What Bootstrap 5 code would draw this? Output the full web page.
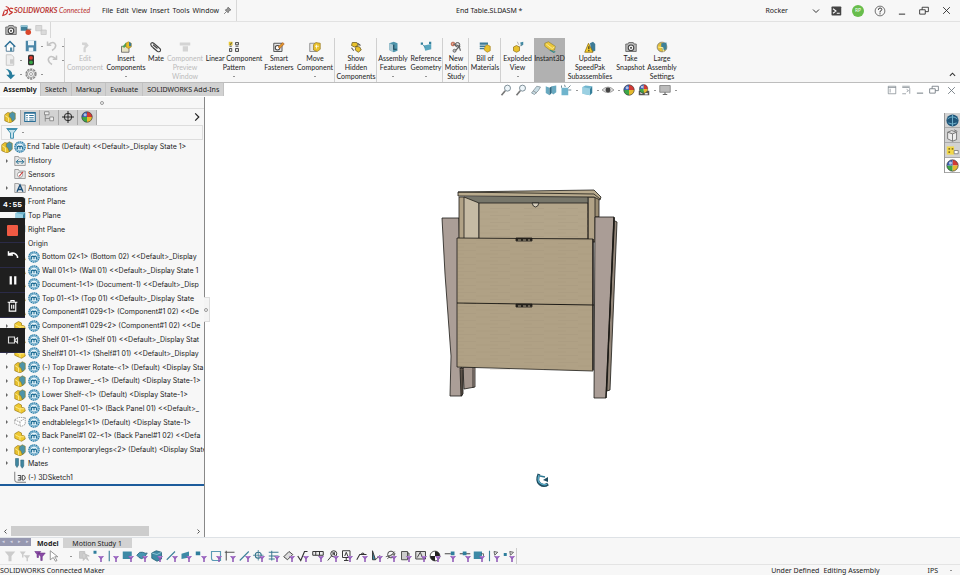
<!DOCTYPE html>
<html lang="en">
<head>
<meta charset="utf-8">
<meta name="viewport" content="width=device-width, initial-scale=1">
<title>End Table.SLDASM</title>
<link href="https://cdn.jsdelivr.net/npm/bootstrap@5.3.0/dist/css/bootstrap.min.css" rel="stylesheet">
<style>
body{font-family:"Noto Sans","Open Sans",sans-serif;font-size:7px;line-height:9px;color:#222;background:#fff}
svg{display:block;flex:none}
button,.btn{font-size:7px;line-height:9px;color:inherit;border-radius:0;background:none}
a{color:inherit;text-decoration:none}
.ic{width:12px;height:12px}
.bar{background:#f7f7f7}
.titlebar{height:22px;border-bottom:1px solid #e2e2e2}
.brand{color:#b8322f;font-style:italic;font-family:Lato,sans-serif;width:102px;padding-left:2px}
.menu{gap:3px}
.sep{width:1px;align-self:stretch;background:#d8d8d8}
.doc-title{padding-right:24px}
.wctl{gap:10px}
.wctl .win{width:12px;display:flex;justify-content:center}
.avatar{width:12px;height:12px;background:#68bd4c;font-size:5px}
.quick{height:16px;padding-left:5px;gap:3px}
.ribbon{height:45px;border-bottom:1px solid #bdbdbd}
.std{width:65px;display:grid;grid-template-columns:21px 21px 21px;grid-auto-rows:14px;padding:1px 0 0 4px;border-right:1px solid #d0d0d0;align-content:start}
.std button,.hud button{display:flex;align-items:center;padding:0;border:0}
.dd::after{content:"";border:1px solid transparent;border-top-color:#333;border-bottom:0;margin-left:4px}
.cmds{display:grid;grid-template-columns:40px 42px 18px 40px 58px 32px 40px 42px 32px 34px 26px 32px 33px 31px 50px 31px 32px;font-family:Lato,sans-serif}
.cmds button{display:flex;flex-direction:column;align-items:center;padding:3px 0 0;border:0;white-space:nowrap;color:#222;overflow:visible;font-family:inherit}
.cmds .ic{margin-bottom:1px}
.cmds button:disabled{color:#bbb;opacity:1}
.cmds .edge{box-shadow:inset -1px 0 #d0d0d0}
.cmds .on{background:#b1b1b1}
.cmds .more::after{content:"";border:1px solid transparent;border-top-color:#333;border-bottom:0;margin-top:4px}
.tabrow{height:14px}
.cm-tabs button{background:#d2d2d2;border:0;border-right:1px solid #c2c2c2;padding:0 4px;height:13px}
.cm-tabs .active{background:#f7f7f7;font-weight:700;width:41px;padding:0}
.hud{gap:3px;padding-left:66px}
.fm{width:205px;border-right:1px solid #888;background:#f7f7f7}
.grip{height:12px;border-bottom:1px solid #ddd}
.dot{width:4px;height:4px;border:1px solid #999;border-radius:50%}
.fm-tabs{height:16px}
.fm-tabs button{width:19px;height:15px;border:0;border-right:1px solid #aaa;background:#d2d2d2;padding:0;display:flex;align-items:center;justify-content:center}
.fm-tabs .active{background:#f7f7f7;width:21px}
.filter{height:15px;margin:0 1px;border:1px solid #ddd}
.tree{display:grid;grid-template-rows:repeat(25,1fr);height:346px;margin:0;padding:0;border-bottom:2px solid #1d5c9c;list-style:none;font-family:Inter,sans-serif}
.tree li{display:flex;align-items:center;gap:2px;padding-left:14px;white-space:nowrap;overflow:hidden}
.tree .root{padding-left:1px;gap:1px}
.tree .x::before{content:"";border:2px solid transparent;border-left:2px solid #666;border-right:0;margin:0 6px 0 -8px}
.tree .x > svg:first-child{margin-left:-2px}
.hscroll{height:12px;gap:3px;padding:0 3px}
.thumb{width:138px;height:10px;background:#cdcdcd}
.rec{position:absolute;left:0;top:100px;width:25px;color:#fff;z-index:3}
.rec .time{background:#1f1f1f;height:15px;border-radius:0 3px 0 0;margin-bottom:6px;font:700 8px/15px "Liberation Mono",monospace}
.rec button{background:#1f1f1f;width:25px;height:25px;border:0;border-bottom:1px solid #2b2b48;padding:0;display:flex;align-items:center;justify-content:center}
.rec .cam{margin-top:10px}
.split{position:absolute;left:204px;top:200px;width:6px;height:25px;background:#f4f4f4;border:1px solid #ddd;border-left:0;z-index:2}
.view{position:relative;background:#fff}
.taskpane{position:absolute;right:0;top:16px;width:16px;border-left:1px solid #999}
.taskpane button{height:15px;width:15px;background:#d2d2d2;border:0;border-bottom:1px solid #aaa;padding:0 1px}
.taskpane .active{background:#fff}
.btabs{height:11px}
.tabnav{background:#9698b0;color:#d5d6e4;width:31px;height:8px;font-size:5px;line-height:7px}
.btabs button{border:0;padding:0 4px;height:11px}
.btabs .model{font-weight:700;background:#f7f7f7;padding:0 4px 0 6px}
.btabs .motion{background:#d2d2d2;width:69px}
.filters{height:17px;border-bottom:1px solid #e4e4e4;padding-left:3px}
.fgrid{display:grid;grid-template-columns:repeat(35,1fr);width:514px;border-right:1px solid #ccc}
.fgrid button{border:0;padding:0;display:flex;align-items:center;justify-content:center}
.status{height:10px}
</style>
<script src="https://cdn.jsdelivr.net/npm/bootstrap@5.3.0/dist/js/bootstrap.bundle.min.js"></script>
</head>
<body class="vh-100 d-flex flex-column overflow-hidden">
<svg width="0" height="0" class="position-absolute" aria-hidden="true">
<defs>
<symbol id="fn" viewBox="0 0 16 16"><path d="M8 8h8l-3 3.500V16h-2v-4.500z" fill="#8d55b5"/><path d="M10 9h4" stroke="#cfa9e8"/></symbol>
<symbol id="asm" viewBox="0 0 16 16"><path d="M1 5l4-3 4 1v4l4 2v4l-5 3-7-3z" fill="#e9c22d" stroke="#8a6a10" stroke-width=".8"/><path d="M7 4l4-3 4 2v8l-4 3-2-5-2-1z" fill="#4e94a8" stroke="#8a7a20" stroke-width=".8"/><path d="M1 6l5 3v6" fill="none" stroke="#fff2a0"/></symbol>
<symbol id="part" viewBox="0 0 16 16"><path d="M1 5l5-3 4 2v3l4 1 1 4-5 3-9-4z" fill="#efc92f" stroke="#9a7712" stroke-width=".9"/><path d="M1 6l6 3 7 0M8 9v5" fill="none" stroke="#fff2a0"/></symbol>
<symbol id="ghost" viewBox="0 0 16 16"><path d="M1 5l5-3 9 0v9l-5 3-9-4zM1 5l6 3 8-5M8 8v6" fill="#fff" stroke="#888" stroke-dasharray="2 1"/></symbol>
<symbol id="m" viewBox="0 0 16 16"><circle cx="8" cy="8" r="6.800" fill="#d6ebf5" stroke="#277ca8" stroke-width="1.800" stroke-dasharray="2 .6"/><circle cx="8" cy="8" r="5.300" fill="#e8f5fb" stroke="#277ca8" stroke-width=".8"/><path d="M4.800 11V6.500M4.800 8q1.600-2.400 3.200 0v3M8 8q1.600-2.400 3.200 0v3" fill="none" stroke="#17678f" stroke-width="1.400"/></symbol>
<symbol id="fold" viewBox="0 0 16 16"><path d="M1 14V2h5l1 2h8v10z" fill="#e6e6e6" stroke="#888"/></symbol>
<symbol id="ball" viewBox="0 0 16 16"><path d="M8 8V1a7 7 0 0 1 7 7z" fill="#d33a35"/><path d="M8 8h7a7 7 0 0 1-7 7z" fill="#e5b92e"/><path d="M8 8v7a7 7 0 0 1-7-7z" fill="#3da648"/><path d="M8 8H1a7 7 0 0 1 7-7z" fill="#3b62b8"/><circle cx="8" cy="8" r="7" fill="none" stroke="#333" stroke-width=".8"/><circle cx="5.500" cy="5" r="2" fill="#fff" opacity=".6"/></symbol>
<symbol id="cam" viewBox="0 0 16 16"><path d="M1 4h3l1-2h6l1 2h3v10H1z" fill="#b9b9b9" stroke="#555"/><circle cx="8" cy="9" r="3.700" fill="#fff" stroke="#444" stroke-width="1.500"/><circle cx="8" cy="9" r="1.500" fill="#555"/></symbol>
<symbol id="cube" viewBox="0 0 16 16"><path d="M2 4l4-2 9 1-3 3v9l-10-2z" fill="#6fb4cd"/><path d="M2 4l10 2v9L2 13z" fill="#9bd0e2"/><path d="M12 6l3-3v9l-3 3z" fill="#357f9a"/></symbol>
<symbol id="mag" viewBox="0 0 16 16"><circle cx="10" cy="5.500" r="4" fill="#eef6fa" stroke="#7b8c95" stroke-width="1.300"/><path d="M7 9l-5 6" stroke="#777" stroke-width="2.200"/></symbol>
<symbol id="funnel" viewBox="0 0 16 16"><path d="M1 2h14L10 8v7H6V8z" fill="currentColor"/></symbol>
<symbol id="restore" viewBox="0 0 16 16"><path d="M1 6h9v7H1zM5 6V2h10v7h-5" fill="none" stroke="currentColor" stroke-width="1.300"/></symbol>
<symbol id="close" viewBox="0 0 16 16"><path d="M2 2l12 12M14 2L2 14" stroke="currentColor" stroke-width="1.500"/></symbol>
<symbol id="min" viewBox="0 0 16 16"><path d="M3 13h10" stroke="currentColor" stroke-width="1.500"/></symbol>
</defs>
</svg>

<header class="bar titlebar d-flex align-items-center flex-shrink-0">
  <a href="#" class="brand d-flex align-items-center text-nowrap fw-bold">
    <svg class="ic" viewBox="0 0 16 16"><path d="M5 2q6 1 2 5l-4 0M4 7q4 0 3 3t-6 4l2-6M15 5q-5-2-5 1t3 3-4 4" fill="none" stroke="#c8312e" stroke-width="1.500"/></svg>
    <span>SOLIDWORKS <span class="fw-normal">Connected</span></span></a>
  <nav class="menu d-flex"><a href="#">File</a><a href="#">Edit</a><a href="#">View</a><a href="#">Insert</a><a href="#">Tools</a><a href="#">Window</a></nav>
  <button class="btn p-0 border-0 ms-1 me-1" aria-label="Pin menu"><svg width="9" height="9" viewBox="0 0 16 16"><path d="M9 2l5 5-3 1-2 4-5-5 4-2zM6 10l-4 4" fill="#999" stroke="#666" stroke-width="1.400"/></svg></button>
  <span class="sep"></span>
  <div class="doc-title flex-grow-1 text-center">End Table.SLDASM *</div>
  <div class="d-flex align-items-center justify-content-end wctl pe-2">
    <button class="btn p-0 border-0 d-flex align-items-center" aria-label="User role">Rocker <svg class="ms-4" width="8" height="8" viewBox="0 0 16 16"><path d="M2 5l6 6 6-6" fill="none" stroke="#333" stroke-width="2"/></svg></button>
    <button class="btn p-0 border-0" aria-label="Console"><svg class="ic" viewBox="0 0 16 16"><rect x="2" y="2" width="13" height="12" rx="1" fill="#444"/><path d="M4 5l4 3-4 3M9 11h4" fill="none" stroke="#fff" stroke-width="1.400"/></svg></button>
    <span class="avatar d-flex align-items-center justify-content-center rounded-circle text-white">RP</span>
    <button class="btn p-0 border-0" aria-label="Help"><svg class="ic" viewBox="0 0 16 16"><circle cx="8" cy="8" r="6.500" fill="none" stroke="#444"/><path d="M5.800 6.500q0-2.500 2.300-2.500t2.300 2Q10.400 7.500 8 8.500V10M8 11v1.500" fill="none" stroke="#333" stroke-width="1.300"/></svg></button>
    <button class="btn win p-0 border-0" aria-label="Minimize"><svg width="10" height="10"><use href="#min"/></svg></button>
    <button class="btn win p-0 border-0" aria-label="Restore"><svg width="10" height="10"><use href="#restore"/></svg></button>
    <button class="btn win p-0 border-0" aria-label="Close"><svg width="9" height="9"><use href="#close"/></svg></button>
  </div>
</header>

<div class="bar quick d-flex align-items-center flex-shrink-0">
  <button class="btn p-0 border-0" aria-label="Capture"><svg class="ic"><use href="#cam"/></svg></button>
  <button class="btn p-0 border-0" aria-label="Record"><svg class="ic" viewBox="0 0 16 16"><path d="M1 2h9v7H1z" fill="#3f7f98"/><path d="M1 2h9v2H1z" fill="#8dc3d6"/><circle cx="11" cy="11" r="3.700" fill="#d9472b"/><path d="M8 7h7" stroke="#555"/></svg></button>
  <button class="btn p-0 border-0" disabled aria-label="Stop"><svg class="ic" viewBox="0 0 16 16"><path d="M1 2h8v7H1zM8 8h7v6H8z" fill="#ccc" stroke="#aaa"/></svg></button>
  <span class="sep"></span>
</div>

<div class="bar ribbon d-flex flex-shrink-0">
  <div class="std flex-shrink-0">
    <button aria-label="Home"><svg class="ic" viewBox="0 0 16 16"><path d="M3 8v7h10V8" fill="#fff" stroke="#2b5f80"/><path d="M1 9l7-7 7 7" fill="none" stroke="#2b6f96" stroke-width="2"/><path d="M8 10h3v5H8z" fill="#4e8aa5"/></svg></button>
    <button class="dd" aria-label="Save"><svg class="ic" viewBox="0 0 16 16"><path d="M1 1h14v14H1z" fill="#4b87a8"/><path d="M4 1h8v6H4zM5 10h6v5H5z" fill="#eef6fa"/></svg></button>
    <button class="dd" aria-label="Undo"><svg class="ic" viewBox="0 0 16 16"><path d="M2 2v5h5M3 6q8-6 10 1 0 4-5 7" fill="none" stroke="#c4c4c4" stroke-width="2"/></svg></button>
    <button class="dd" aria-label="New"><svg class="ic" viewBox="0 0 16 16"><path d="M3 1h7l3 3v11H3z" fill="#eee" stroke="#bbb"/><path d="M8 7h5v6H8z" fill="#ccc"/></svg></button>
    <button aria-label="Rebuild"><svg class="ic" viewBox="0 0 16 16"><rect x="4" y="1" width="8" height="14" rx="2" fill="#333"/><circle cx="8" cy="5" r="2.500" fill="#e23b2e"/><circle cx="8" cy="11" r="2.500" fill="#36a545"/></svg></button>
    <button class="dd" aria-label="Redo"><svg class="ic" viewBox="0 0 16 16"><path d="M14 2v5H9M13 6Q5 0 3 7q0 4 5 7" fill="none" stroke="#c4c4c4" stroke-width="2"/></svg></button>
    <button class="dd" aria-label="Select"><svg class="ic" viewBox="0 0 16 16"><path d="M2 1q9 1 9 8h4l-6 6-6-6h4q0-5-5-8z" fill="#277c9c"/></svg></button>
    <button class="dd" aria-label="Options"><svg class="ic" viewBox="0 0 16 16"><circle cx="8" cy="8" r="6.500" fill="none" stroke="#888" stroke-width="2" stroke-dasharray="3 1.100"/><circle cx="8" cy="8" r="4.800" fill="#eee" stroke="#888"/><circle cx="8" cy="8" r="2" fill="#fff" stroke="#888"/></svg></button>
  </div>
  <div class="cmds flex-shrink-0">
    <button disabled><svg class="ic" viewBox="0 0 16 16"><path d="M4 2h6l3 4-4 4v5H6V9L8 6 4 5z" fill="#d4d4d4"/></svg>Edit<br>Component</button>
    <button class="more"><svg class="ic" viewBox="0 0 16 16"><path d="M2 7h10v8H2z" fill="#e6e2c4" stroke="#555"/><path d="M3 8l5-6 2 2-4 5z" fill="#4ca55a"/><path d="M8 3l3-2 4 2v5l-4 2-3-2z" fill="#e6bc28" stroke="#9a7712" stroke-width=".7"/><path d="M12 1l3 2v4h-3z" fill="#3c7992"/></svg>Insert<br>Components</button>
    <button><svg class="ic" viewBox="0 0 16 16"><path d="M4 9l6 5q3 1 4-1t-2-4L5 3Q2 1 1 4q0 1 1 3l7 6M4 5l6 5" fill="none" stroke="#444" stroke-width="1.500"/></svg>Mate</button>
    <button disabled><svg class="ic" viewBox="0 0 16 16"><path d="M1 2h14v4H1zM5 7h7v7H5z" fill="#d4d4d4"/></svg>Component<br>Preview<br>Window</button>
    <button class="more"><svg class="ic" viewBox="0 0 16 16"><path d="M1 1h5v5H1z" fill="#e8c730"/><path d="M10 2h4v3h-4zM2 10h3v4H2zM10 10h4v4h-4z" fill="#ddd" stroke="#444" stroke-width="1.200"/><path d="M2 7h3M10 7h4M3 5l2-3" stroke="#444" stroke-width="1.200"/></svg>Linear Component<br>Pattern</button>
    <button><svg class="ic" viewBox="0 0 16 16"><path d="M1 3h11v11H1z" fill="#e4e4e4" stroke="#555" stroke-width="1.300"/><circle cx="6" cy="9" r="3" fill="#fff" stroke="#444" stroke-width="1.400"/><path d="M7 8l6-6 2 2-6 6z" fill="#e29a2c" stroke="#a04b20" stroke-width=".8"/></svg>Smart<br>Fasteners</button>
    <button class="more edge"><svg class="ic" viewBox="0 0 16 16"><path d="M1 3h9v11H1z" fill="#e6e6e6" stroke="#777"/><path d="M6 5l3-3 6 1v8l-4 3-5-2z" fill="#e9c22d" stroke="#8a6a10" stroke-width=".8"/><path d="M10 5v5M8 7h5" stroke="#fff"/></svg>Move<br>Component</button>
    <button class="edge"><svg class="ic" viewBox="0 0 16 16"><path d="M3 2h6l2 4-5 2-4-2zM8 7l5 1 2 4-4 3-4-3z" fill="#e9c22d" stroke="#6a5a20"/><path d="M2 9l3 4M10 3l4 3" stroke="#555" stroke-width="1.400"/></svg>Show<br>Hidden<br>Components</button>
    <button class="more"><svg class="ic" viewBox="0 0 16 16"><path d="M3 3l6-2 5 2v10l-5 2-6-3z" fill="#4e94ab"/><path d="M3 3l5 2v10l-5-3z" fill="#a8c9d4"/><path d="M9 5v6h4" fill="none" stroke="#20485a" stroke-width="1.500"/></svg>Assembly<br>Features</button>
    <button class="more edge"><svg class="ic" viewBox="0 0 16 16"><path d="M5 6l10-2v7L7 13z" fill="#58a5be"/><path d="M1 2h3v3H1zM12 1h3v3h-3z" fill="#36809c"/><path d="M4 5l3 4" stroke="#36809c"/></svg>Reference<br>Geometry</button>
    <button class="edge"><svg class="ic" viewBox="0 0 16 16"><circle cx="4" cy="4" r="2.500" fill="#f5a38a" stroke="#a04b30"/><circle cx="10" cy="5" r="3" fill="#ddd" stroke="#555" stroke-width="1.300"/><path d="M4 4l9 3-7 7M12 7l2 6" fill="none" stroke="#666" stroke-width="1.500"/><circle cx="6" cy="13" r="2" fill="#bbb" stroke="#555"/></svg>New<br>Motion<br>Study</button>
    <button class="edge"><svg class="ic" viewBox="0 0 16 16"><path d="M1 2h11v3H1zM1 6h8v2H1zM1 9h6v2H1z" fill="#3d7b97"/><path d="M8 7l3-2 4 2v6l-4 2-4-3z" fill="#e9c22d" stroke="#9a7712" stroke-width=".8"/></svg>Bill of<br>Materials</button>
    <button class="more"><svg class="ic" viewBox="0 0 16 16"><path d="M2 8l4-2 4 2v5l-4 2-4-2z" fill="#e9c22d" stroke="#8a6a10" stroke-width=".9"/><path d="M11 2l4-1v4l-3 2z" fill="#4189a3"/><path d="M9 8l4-3M7 1l2 4" stroke="#999"/></svg>Exploded<br>View</button>
    <button class="on"><svg class="ic" viewBox="0 0 16 16"><path d="M1 3l5-2 9 6-1 5-5 1-8-6z" fill="#ecc83c" stroke="#8a7a30" stroke-width=".8"/><path d="M3 4l8 6 3-2" stroke="#fff7b0" fill="none"/><path d="M8 12l5 3 2-1" stroke="#388" stroke-width="1.500" fill="none"/></svg>Instant3D</button>
    <button><svg class="ic" viewBox="0 0 16 16"><path d="M8 3l4-2 3 3v9l-5 2z" fill="#3d7b97"/><path d="M6 3l6 12H1z" fill="#f4cd2c" stroke="#8a6a10"/><path d="M6.500 7v4M6.500 12v1.500" stroke="#222" stroke-width="1.400"/></svg>Update<br>SpeedPak<br>Subassemblies</button>
    <button><svg class="ic"><use href="#cam"/></svg>Take<br>Snapshot</button>
    <button><svg class="ic" viewBox="0 0 16 16"><circle cx="8" cy="8" r="6.500" fill="#e5bf35" stroke="#777"/><path d="M7 3l7-1v9l-5 2-2-5z" fill="#3d8199"/><path d="M3 8l6 1 1 5" fill="none" stroke="#fff2a0" stroke-width="1.400"/></svg>Large<br>Assembly<br>Settings</button>
  </div>
  <button class="btn p-0 border-0 ms-auto align-self-end me-1 mb-1" aria-label="Collapse ribbon"><svg width="7" height="7" viewBox="0 0 16 16"><path d="M2 11l6-6 6 6" fill="none" stroke="#333" stroke-width="2.500"/></svg></button>
</div>

<div class="tabrow d-flex flex-shrink-0">
  <div class="cm-tabs d-flex flex-shrink-0" role="tablist">
    <button class="active" role="tab">Assembly</button><button role="tab">Sketch</button><button role="tab">Markup</button><button role="tab">Evaluate</button><button role="tab">SOLIDWORKS Add-Ins</button>
  </div>
  <div class="hud d-flex align-items-center mx-auto" role="toolbar" aria-label="View">
    <button aria-label="Zoom to fit"><svg class="ic"><use href="#mag"/></svg></button>
    <button aria-label="Zoom to area"><svg class="ic"><use href="#mag"/></svg></button>
    <button aria-label="Previous view"><svg class="ic" viewBox="0 0 16 16"><path d="M2 12l7-9 5 1-3 5-5 5z" fill="#c9dde5" stroke="#7b8c95"/><path d="M4 9l5 3" stroke="#888"/></svg></button>
    <button aria-label="Section view"><svg class="ic" viewBox="0 0 16 16"><path d="M1 3l5 2v10l-5-3zM9 3l6-1v9l-4 3-2-2z" fill="#68a9c0"/><path d="M6 5l3-2v9l-3 3z" fill="#2d6a84"/></svg></button>
    <button class="dd" aria-label="View orientation"><svg class="ic" viewBox="0 0 16 16"><path d="M2 5h9v10H2z" fill="#6fb4cd"/><path d="M11 5l3-3M2 5V2M11 8h4M6 1l1 3" stroke="#6b8792" stroke-width="1.300"/></svg></button>
    <button class="dd" aria-label="Display style"><svg class="ic"><use href="#cube"/></svg></button>
    <button class="dd" aria-label="Hide items"><svg class="ic" viewBox="0 0 16 16"><path d="M0 8q8-8 16 0-8 7-16 0z" fill="#ddd" stroke="#888"/><circle cx="8" cy="8" r="3.300" fill="#444"/></svg></button>
    <button aria-label="Edit appearance"><svg class="ic"><use href="#ball"/></svg></button>
    <button class="dd" aria-label="Apply scene"><svg class="ic" viewBox="0 0 16 16"><path d="M1 9h14v6H1z" fill="#555"/><path d="M3 11h3v2H3zM9 12h4v2H9z" fill="#eee"/><use href="#ball" width="13" height="13" x="1"/></svg></button>
    <button class="dd" aria-label="View settings"><svg class="ic" viewBox="0 0 16 16"><path d="M1 2h14v9H1z" fill="#bbb" stroke="#777"/><path d="M8 11v3M5 14h6" stroke="#666" stroke-width="1.500"/></svg></button>
  </div>
  <div class="d-flex align-items-center gap-1 pe-1 text-secondary">
    <button class="btn p-0 border-0" aria-label="Dock left"><svg width="10" height="10" viewBox="0 0 16 16"><path d="M2 2h12v12H2zM2 4h12M5 6v6" fill="none" stroke="currentColor"/></svg></button>
    <button class="btn p-0 border-0" aria-label="Dock right"><svg width="10" height="10" viewBox="0 0 16 16"><path d="M2 2h12M14 5v9M2 4h12M2 14h6M9 7l3 2-3 2" fill="none" stroke="currentColor"/></svg></button>
    <button class="btn p-0 border-0" aria-label="Minimize document"><svg width="10" height="10"><use href="#min"/></svg></button>
    <button class="btn p-0 border-0" aria-label="Restore document"><svg width="10" height="10"><use href="#restore"/></svg></button>
    <button class="btn p-0 border-0 ms-1" aria-label="Close document"><svg width="9" height="9"><use href="#close"/></svg></button>
  </div>
</div>

<main class="d-flex flex-grow-1 position-relative overflow-hidden">
  <aside class="fm d-flex flex-column flex-shrink-0">
    <div class="grip d-flex align-items-center justify-content-center flex-shrink-0"><span class="dot"></span></div>
    <div class="fm-tabs d-flex align-items-center flex-shrink-0" role="tablist">
      <button class="active" role="tab" aria-label="FeatureManager"><svg class="ic"><use href="#asm"/></svg></button>
      <button role="tab" aria-label="Properties"><svg class="ic" viewBox="0 0 16 16"><path d="M1 2h14v12H1z" fill="#fff" stroke="#2b6f96" stroke-width="1.500"/><path d="M1 3h14M3 6h2M3 9h2M3 12h2M7 6h6M7 9h6M7 12h6" stroke="#2b6f96" stroke-width="1.500"/></svg></button>
      <button role="tab" aria-label="Configurations"><svg class="ic" viewBox="0 0 16 16"><path d="M2 1h6v4H2zM9 8h5v5H9z" fill="#eee" stroke="#777"/><path d="M3 5v9M3 10h6" stroke="#777"/></svg></button>
      <button role="tab" aria-label="Dimensions"><svg class="ic" viewBox="0 0 16 16"><circle cx="8" cy="8" r="5" fill="none" stroke="#222" stroke-width="1.300"/><path d="M8 0v16M0 8h16" stroke="#222" stroke-width="1.300"/></svg></button>
      <button role="tab" aria-label="Display"><svg class="ic"><use href="#ball"/></svg></button>
      <a href="#" class="ms-auto me-1" aria-label="More tabs"><svg width="6" height="10" viewBox="0 0 10 16"><path d="M2 2l6 6-6 6" fill="none" stroke="#222" stroke-width="2"/></svg></a>
    </div>
    <div class="filter d-flex align-items-center flex-shrink-0"><button class="btn dd p-0 border-0 d-flex align-items-center ms-1" aria-label="Filter tree"><svg class="ic" viewBox="0 0 16 16"><path d="M1 2h14L10 8v7H6V8z" fill="#c4e0ea" stroke="#3f8fae" stroke-width="1.300"/><path d="M1 2h14l-2 2H3z" fill="#3f8fae"/></svg></button></div>
    <ul class="tree flex-shrink-0">
      <li class="root"><svg class="ic"><use href="#asm"/></svg><svg class="ic"><use href="#m"/></svg>End Table (Default) &lt;&lt;Default&gt;_Display State 1&gt;</li>
      <li class="x"><svg class="ic" viewBox="0 0 16 16"><use href="#fold"/><path d="M3 9h10M6 6L3 9l3 3M10 6l3 3-3 3" fill="none" stroke="#276f90" stroke-width="1.300"/></svg>History</li>
      <li><svg class="ic" viewBox="0 0 16 16"><use href="#fold"/><circle cx="8" cy="9" r="3.500" fill="#fff" stroke="#888"/><path d="M7 11l5-6" stroke="#c33" stroke-width="1.500"/></svg>Sensors</li>
      <li class="x"><svg class="ic" viewBox="0 0 16 16"><use href="#fold"/><path d="M4 13l4-9 4 9M6 10h5" fill="none" stroke="#1c4f78" stroke-width="1.800"/></svg>Annotations</li>
      <li><svg class="ic"><use href="#cube"/></svg>Front Plane</li>
      <li><svg class="ic"><use href="#cube"/></svg>Top Plane</li>
      <li><svg class="ic"><use href="#cube"/></svg>Right Plane</li>
      <li><svg class="ic" viewBox="0 0 16 16"><path d="M3 2v11h11" fill="none" stroke="#357f9a" stroke-width="1.500"/></svg>Origin</li>
      <li class="x"><svg class="ic"><use href="#part"/></svg><svg class="ic"><use href="#m"/></svg>Bottom 02&lt;1&gt; (Bottom 02) &lt;&lt;Default&gt;_Display</li>
      <li class="x"><svg class="ic"><use href="#part"/></svg><svg class="ic"><use href="#m"/></svg>Wall 01&lt;1&gt; (Wall 01) &lt;&lt;Default&gt;_Display State 1</li>
      <li class="x"><svg class="ic"><use href="#part"/></svg><svg class="ic"><use href="#m"/></svg>Document-1&lt;1&gt; (Document-1) &lt;&lt;Default&gt;_Disp</li>
      <li class="x"><svg class="ic"><use href="#part"/></svg><svg class="ic"><use href="#m"/></svg>Top 01-&lt;1&gt; (Top 01) &lt;&lt;Default&gt;_Display State</li>
      <li class="x"><svg class="ic"><use href="#part"/></svg><svg class="ic"><use href="#m"/></svg>Component#1 029&lt;1&gt; (Component#1 02) &lt;&lt;De</li>
      <li class="x"><svg class="ic"><use href="#part"/></svg><svg class="ic"><use href="#m"/></svg>Component#1 029&lt;2&gt; (Component#1 02) &lt;&lt;De</li>
      <li class="x"><svg class="ic"><use href="#part"/></svg><svg class="ic"><use href="#m"/></svg>Shelf 01-&lt;1&gt; (Shelf 01) &lt;&lt;Default&gt;_Display Stat</li>
      <li class="x"><svg class="ic"><use href="#part"/></svg><svg class="ic"><use href="#m"/></svg>Shelf#1 01-&lt;1&gt; (Shelf#1 01) &lt;&lt;Default&gt;_Display</li>
      <li class="x"><svg class="ic"><use href="#asm"/></svg><svg class="ic"><use href="#m"/></svg>(-) Top Drawer Rotate-&lt;1&gt; (Default) &lt;Display Sta</li>
      <li class="x"><svg class="ic"><use href="#asm"/></svg><svg class="ic"><use href="#m"/></svg>(-) Top Drawer_-&lt;1&gt; (Default) &lt;Display State-1&gt;</li>
      <li class="x"><svg class="ic"><use href="#asm"/></svg><svg class="ic"><use href="#m"/></svg>Lower Shelf-&lt;1&gt; (Default) &lt;Display State-1&gt;</li>
      <li class="x"><svg class="ic"><use href="#part"/></svg><svg class="ic"><use href="#m"/></svg>Back Panel 01-&lt;1&gt; (Back Panel 01) &lt;&lt;Default&gt;_</li>
      <li class="x"><svg class="ic"><use href="#ghost"/></svg><svg class="ic"><use href="#m"/></svg>endtablelegs1&lt;1&gt; (Default) &lt;Display State-1&gt;</li>
      <li class="x"><svg class="ic"><use href="#part"/></svg><svg class="ic"><use href="#m"/></svg>Back Panel#1 02-&lt;1&gt; (Back Panel#1 02) &lt;&lt;Defa</li>
      <li class="x"><svg class="ic"><use href="#asm"/></svg><svg class="ic"><use href="#m"/></svg>(-) contemporarylegs&lt;2&gt; (Default) &lt;Display State</li>
      <li class="x"><svg class="ic" viewBox="0 0 16 16"><path d="M2 2h4v9l-2 3-2-3zM9 4h4v8l-2 3-2-3z" fill="#3f86a0" stroke="#2a5e72" stroke-width=".7"/></svg>Mates</li>
      <li><svg class="ic" viewBox="0 0 16 16"><path d="M1 1v11q0 3 3 3h12" fill="none" stroke="#555"/><path d="M5 6h4v6H5M6 9h3M11 6h2q2 1 2 3t-2 3h-2z" fill="none" stroke="#333" stroke-width="1.200"/></svg>(-) 3DSketch1</li>
    </ul>
    <div class="hscroll d-flex align-items-center mt-auto flex-shrink-0">
      <svg width="5" height="7" viewBox="0 0 10 14"><path d="M7 3L3 7l4 4" fill="none" stroke="#444" stroke-width="1.800"/></svg>
      <div class="thumb"></div>
      <svg class="ms-auto" width="5" height="7" viewBox="0 0 10 14"><path d="M3 3l4 4-4 4" fill="none" stroke="#444" stroke-width="1.800"/></svg>
    </div>
  </aside>
  <div class="split d-flex align-items-center"><span class="dot"></span></div>

  <div class="rec text-center" role="toolbar" aria-label="Recorder">
    <div class="time">4:55</div>
    <button aria-label="Stop recording"><svg width="11" height="11" viewBox="0 0 11 11"><rect width="11" height="11" rx="1" fill="#f05a43"/></svg></button>
    <button aria-label="Restart"><svg class="ic" viewBox="0 0 16 16"><path d="M2 3v5h6M3 7q7-4 11 3v2" fill="none" stroke="#fff" stroke-width="2"/></svg></button>
    <button aria-label="Pause"><svg class="ic" viewBox="0 0 16 16"><path d="M5 3v11M11 3v11" stroke="#fff" stroke-width="3"/></svg></button>
    <button aria-label="Delete"><svg width="13" height="13" viewBox="0 0 16 16"><path d="M2 4h12M6 4V2h4v2M4 4v11h8V4M7 7v5M9.500 7v5" fill="none" stroke="#fff" stroke-width="1.400"/></svg></button>
    <button class="cam" aria-label="Camera"><svg class="ic" viewBox="0 0 16 16"><path d="M2 4h8v8H2zM10 8l4-3v7z" fill="none" stroke="#ddd" stroke-width="1.500"/></svg></button>
  </div>

  <section class="view flex-grow-1 overflow-hidden">
    <svg class="w-100 h-100" viewBox="205 97 755 440" preserveAspectRatio="xMinYMin meet" role="img" aria-label="End table model">
      <defs><pattern id="grain" width="34" height="7" patternUnits="userSpaceOnUse"><path d="M0 2h22M14 5.500h20" stroke="#9a8b70" stroke-width=".5" opacity=".35"/></pattern></defs>
      <g stroke="#1c1a16" stroke-width=".8" stroke-linejoin="round">
        <path d="M463 367h12v20l-11 2z" fill="#a5978f"/><path d="M473 368v20" />
        <path d="M613 220l4 2-7 168-3 1z" fill="#938679"/><path d="M614 218v10l-8 163" fill="none" stroke-width="1.300"/>
        <path d="M442 218h17l3 178h-12l1-40-6-82z" fill="#ab9e97"/><path d="M460 368h3v26l-2 2z" fill="#5a5048"/>
        <path d="M594 194l5 3v20h-5z" fill="#9a8c72"/>
        <path d="M459 197h136v45H459z" fill="#b1a286"/>
        <path d="M464 197h125v6H479z" fill="#77766a" stroke="none"/>
        <path d="M464 197l15 6v36h-15z" fill="#c6bba4"/>
        <path d="M479 203h109v36H479z" fill="#b3a58a"/>
        <path d="M588 197v42" />
        <path d="M458 192l136-2 7 7-1 3-6-3-136-1z" fill="#b9ab8e"/><path d="M458 192l136 2 6 5" fill="none"/>
        <path d="M532 203h7q-1 4-3.500 4T532 203z" fill="#d8d0be"/>
        <path d="M457 238l136 1v132l-136-4z" fill="#b0a185"/>
        <path d="M457 303l137 2" stroke-width="1"/>
        <path d="M516 238h16v3h-16zM516 304h16v3h-16z" fill="#28251e"/><path d="M518 240h3M523 240h3M528 240h2M518 306h3M523 306h3M528 306h2" stroke="#c9bda3"/>
        <path d="M595 217h19l-8 181h-12z" fill="#aa9d96"/><path d="M593 239v131" stroke-width="1.300"/><path d="M614 217l-8 181" stroke-width="1.300"/>
      </g>
      <path d="M458 240h134v130H458z" fill="url(#grain)"/><path d="M480 208h108v30H480z" fill="url(#grain)"/>
      <path d="M539 474q-3 7 1 10 4 3 8 0" fill="none" stroke="#1f4d60" stroke-width="3"/><path d="M539 475q-2 6 1 8 4 3 7 1" fill="none" stroke="#57aac6" stroke-width="1.400"/><path d="M543 480l5-3v5z" fill="#1f4d60"/><path d="M540 476l5 1" stroke="#2d7892" stroke-width="1.500"/>
    </svg>
    <div class="taskpane d-flex flex-column">
      <button aria-label="Resources"><svg width="13" height="13" viewBox="0 0 16 16"><circle cx="8" cy="8" r="7.500" fill="#20567a"/><path d="M2 6q6-5 12 0M3 11q5 3 10 0M8 1v14" fill="none" stroke="#6fb1cc" stroke-width="1.200"/></svg></button>
      <button aria-label="Design library"><svg width="13" height="13" viewBox="0 0 16 16"><path d="M2 4l5-2 6 2v9l-5 2-6-3zM2 4l6 2 5-2M8 6v9M10 1l4 2" fill="#eee" stroke="#666"/></svg></button>
      <button aria-label="View palette"><svg width="13" height="13" viewBox="0 0 16 16"><path d="M1 3h9v10H1z" fill="#f2d84a"/><path d="M3 5h2v2H3zM7 5h2v2H7zM3 9h2v2H3z" fill="#8a7620"/><path d="M10 8h5v4h-5z" fill="#fff" stroke="#777"/></svg></button>
      <button class="active" aria-label="Appearances"><svg width="13" height="13"><use href="#ball"/></svg></button>
    </div>
  </section>
</main>

<div class="bar btabs d-flex flex-shrink-0 border-top">
  <div class="tabnav d-flex justify-content-around" aria-hidden="true"><span>◂</span><span>◂</span><span>▸</span><span>▸</span></div>
  <button class="model">Model</button><button class="motion">Motion Study 1</button>
</div>
<div class="bar filters d-flex flex-shrink-0">
  <div class="fgrid" role="toolbar" aria-label="Selection filters">
    <button aria-label="Filter"><svg class="ic" style="color:#ccc"><use href="#funnel"/></svg></button>
    <button aria-label="Clear"><svg class="ic" viewBox="0 0 16 16"><path d="M1 2h8L6 6v4H4V6zM6 7h9l-3 4v4h-2v-4z" fill="#ccc"/></svg></button>
    <button aria-label="All"><svg class="ic" viewBox="0 0 16 16"><path d="M1 2h8L6 6v4H4V6zM5 4h10l-4 5v5H9V9z" fill="#8c4aa8" stroke="#5f2a7c" stroke-width=".7"/></svg></button>
    <button aria-label="Pointer"><svg class="ic" viewBox="0 0 16 16"><path d="M3 1v12l4-3 3 5 2-1-3-5h4z" fill="#fff" stroke="#777"/></svg></button>
    <button class="dd" aria-label="Pointer menu"></button>
    <button aria-label="Lasso"><svg class="ic" viewBox="0 0 16 16"><path d="M2 2h7v9H2zM7 4v10l3-3 4 3-3-6h4z" fill="#ccc" stroke="#bbb"/></svg></button>
    <button aria-label="Vertices"><svg class="ic" viewBox="0 0 16 16"><path d="M2 1h4v4H2z" fill="#2f7e9c"/><use href="#fn"/></svg></button>
    <button aria-label="Edges"><svg class="ic" viewBox="0 0 16 16"><path d="M3 1v14" stroke="#3b7f98" stroke-width="1.500"/><use href="#fn"/></svg></button>
    <button aria-label="Faces"><svg class="ic" viewBox="0 0 16 16"><path d="M1 2h12v10H1z" fill="#3d8aa6"/><use href="#fn"/></svg></button>
    <button aria-label="Surfaces"><svg class="ic" viewBox="0 0 16 16"><path d="M1 7q4-6 8-4t6 1l-4 6q-4 3-7 0z" fill="#4795b1" stroke="#235f78"/><use href="#fn"/></svg></button>
    <button aria-label="Solids"><svg class="ic" viewBox="0 0 16 16"><path d="M1 4l6-3 7 2v9l-6 3-7-4z" fill="#3d8aa6" stroke="#1f5a70"/><path d="M1 4l7 2 6-3" fill="none" stroke="#a5d3e2"/><use href="#fn"/></svg></button>
    <button aria-label="Axes"><svg class="ic" viewBox="0 0 16 16"><path d="M1 13L12 2" stroke="#3b7f98" stroke-width="1.500"/><use href="#fn"/></svg></button>
    <button aria-label="Planes"><svg class="ic" viewBox="0 0 16 16"><path d="M2 5l10-3v8L2 12z" fill="#3d8aa6"/><use href="#fn"/></svg></button>
    <button aria-label="Sketch points"><svg class="ic" viewBox="0 0 16 16"><path d="M1 2h6v5H1z" fill="#2f7e9c"/><use href="#fn"/></svg></button>
    <button aria-label="Sketches"><svg class="ic" viewBox="0 0 16 16"><path d="M2 2h12v12H5q-3 0-3-3z" fill="none" stroke="#5a9ab5" stroke-width="1.500"/><use href="#fn"/></svg></button>
    <button aria-label="Segments"><svg class="ic" viewBox="0 0 16 16"><path d="M3 14V3h11M1 3h3M3 1v3" fill="none" stroke="#555" stroke-width="1.400"/><use href="#fn"/></svg></button>
    <button aria-label="Midpoints"><svg class="ic" viewBox="0 0 16 16"><path d="M1 14L13 2" stroke="#3b7f98" stroke-width="1.500"/><use href="#fn"/></svg></button>
    <button aria-label="Center marks"><svg class="ic" viewBox="0 0 16 16"><circle cx="7" cy="7" r="4" fill="none" stroke="#37758e" stroke-width="1.500"/><path d="M7 0v14M0 7h14" stroke="#37758e"/><use href="#fn"/></svg></button>
    <button aria-label="Centerlines"><svg class="ic" viewBox="0 0 16 16"><path d="M1 3h13M1 8h13M1 12h8M5 1v13" stroke="#37758e" stroke-width="1.300"/><use href="#fn"/></svg></button>
    <button aria-label="Dimensions"><svg class="ic" viewBox="0 0 16 16"><path d="M1 9l7-7 5 4-7 7z" fill="#ddd" stroke="#444" stroke-width="1.300"/><use href="#fn"/></svg></button>
    <button aria-label="Surface finish"><svg class="ic" viewBox="0 0 16 16"><path d="M1 8l4 6 5-12h4" fill="none" stroke="#333" stroke-width="1.500"/><use href="#fn"/></svg></button>
    <button aria-label="Tolerances"><svg class="ic" viewBox="0 0 16 16"><path d="M1 2h14v5H1zM5 2v5M10 2v5" fill="#eee" stroke="#333" stroke-width="1.300"/><use href="#fn"/></svg></button>
    <button aria-label="Notes"><svg class="ic" viewBox="0 0 16 16"><circle cx="9" cy="5" r="4" fill="none" stroke="#333" stroke-width="1.300"/><path d="M6 8l-5 6M8 7V3l2 4V3" stroke="#333" fill="none" stroke-width="1.200"/><use href="#fn"/></svg></button>
    <button aria-label="Datums"><svg class="ic" viewBox="0 0 16 16"><path d="M2 1h10v9H2zM5 8l2-5 2 5M4 14h6M7 10v4" fill="none" stroke="#333" stroke-width="1.300"/><use href="#fn"/></svg></button>
    <button aria-label="Welds"><svg class="ic" viewBox="0 0 16 16"><path d="M1 13l4-7h9M7 6q2-4 4 0" fill="none" stroke="#333" stroke-width="1.400"/><use href="#fn"/></svg></button>
    <button aria-label="Weld beads"><svg class="ic" viewBox="0 0 16 16"><path d="M2 1v12h4zM6 13l6-6" fill="#3d8aa6" stroke="#333" stroke-width="1.200"/><use href="#fn"/></svg></button>
    <button aria-label="Cosmetic threads"><svg class="ic" viewBox="0 0 16 16"><circle cx="8" cy="6" r="4.500" fill="none" stroke="#444" stroke-width="1.300"/><path d="M1 9l13-4M3 12L13 2" stroke="#444"/><use href="#fn"/></svg></button>
    <button aria-label="Blocks"><svg class="ic" viewBox="0 0 16 16"><path d="M2 2h8v11H2zM10 4h2v8" fill="#ccc" stroke="#444" stroke-width="1.200"/><use href="#fn"/></svg></button>
    <button aria-label="Hatches"><svg class="ic" viewBox="0 0 16 16"><path d="M1 2h13v10H1zM3 10l4-7 3 7" fill="#ddd" stroke="#444" stroke-width="1.300"/><use href="#fn"/></svg></button>
    <button aria-label="Center of mass"><svg class="ic" viewBox="0 0 16 16"><circle cx="8" cy="8" r="6.500" fill="#fff" stroke="#222"/><path d="M8 8V1.500A6.500 6.500 0 0 1 14.500 8zM8 8v6.500A6.500 6.500 0 0 1 1.500 8z" fill="#222"/><use href="#fn"/></svg></button>
    <button aria-label="Connection points"><svg class="ic" viewBox="0 0 16 16"><path d="M1 5h8" stroke="#444" stroke-width="1.300"/><path d="M9 2h5v5H9z" fill="#2f7e9c"/><use href="#fn"/></svg></button>
    <button aria-label="Routing points"><svg class="ic" viewBox="0 0 16 16"><path d="M1 5h14" stroke="#444" stroke-width="1.300"/><path d="M5 2h5v5H5z" fill="#2f7e9c"/><use href="#fn"/></svg></button>
    <button aria-label="Mesh"><svg class="ic" viewBox="0 0 16 16"><path d="M1 2h11v10H1z" fill="#3d8aa6"/><path d="M11 5h3v4" fill="none" stroke="#444"/><use href="#fn"/></svg></button>
    <button aria-label="Mesh edges"><svg class="ic" viewBox="0 0 16 16"><path d="M2 1v14" stroke="#3b7f98" stroke-width="1.500"/><path d="M8 2l5 1-4 4z" fill="#ddd" stroke="#444"/><use href="#fn"/></svg></button>
    <button aria-label="Mesh vertices"><svg class="ic" viewBox="0 0 16 16"><path d="M1 4h4v4H1z" fill="#2f7e9c"/><path d="M9 2l5 1-4 4z" fill="#ddd" stroke="#444"/><use href="#fn"/></svg></button>
  </div>
</div>
<footer class="bar status d-flex align-items-center flex-shrink-0">
  <span>SOLIDWORKS Connected Maker</span>
  <span class="ms-auto">Under Defined</span><span class="ms-1">Editing Assembly</span>
  <button class="btn dd p-0 border-0 d-flex align-items-center ms-5 me-2" aria-label="Units"><span class="me-2">IPS</span></button>
</footer>
</body>
</html>
